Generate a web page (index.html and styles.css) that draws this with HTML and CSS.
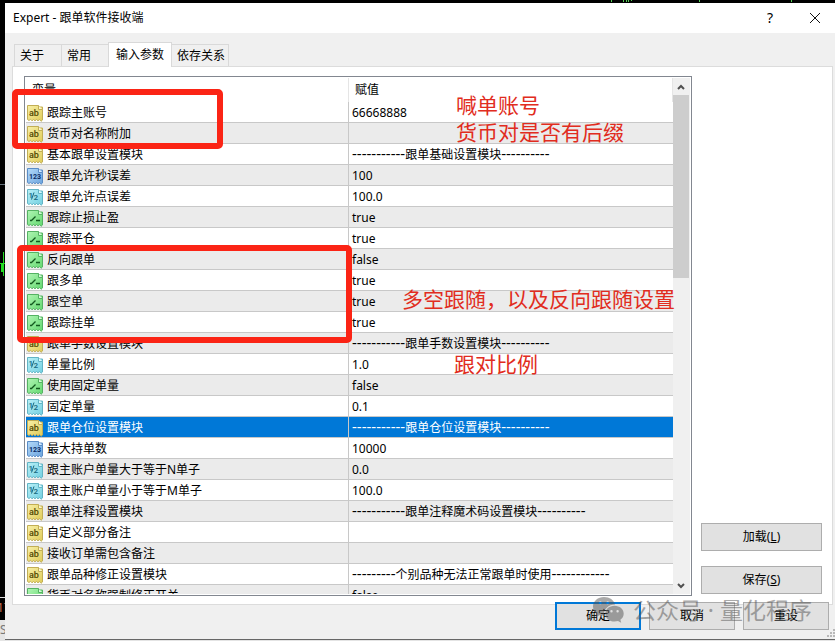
FILE: index.html
```html
<!DOCTYPE html>
<html lang="zh-CN">
<head>
    <meta charset="UTF-8">
    <meta name="viewport" content="width=device-width, initial-scale=1.0">
    <title>Expert - 跟单软件接收端</title>
    <link rel="stylesheet" href="styles.css">
</head>
<body>
    <!-- Icon shapes shared by the table rows -->
    <svg class="sprite" aria-hidden="true">
        <defs>
            <linearGradient id="gold" x1="0" y1="0" x2="1" y2="1"><stop offset="0" stop-color="#f8f0a8"/><stop offset="1" stop-color="#dfcb58"/></linearGradient>
            <linearGradient id="blue" x1="0" y1="0" x2="1" y2="1"><stop offset="0" stop-color="#b4dafa"/><stop offset="1" stop-color="#6ba3dc"/></linearGradient>
            <linearGradient id="cyan" x1="0" y1="0" x2="1" y2="1"><stop offset="0" stop-color="#b8f0f8"/><stop offset="1" stop-color="#72cfe0"/></linearGradient>
            <linearGradient id="green" x1="0" y1="0" x2="1" y2="1"><stop offset="0" stop-color="#b0f5b4"/><stop offset="1" stop-color="#62d86e"/></linearGradient>
            <path id="paper" d="M.5 .5H11.5L13 2H15.5V15L14 16.3L12.5 14.5L11 15.8L9.5 14.5L8 15.8L6.5 14.5L5 15.8L3.5 14.3L2 15.5L.5 14.5Z"/>
            <path id="fold" d="M11.5 .5V4.5H15.5"/>
            <symbol id="text" viewBox="0 0 16 17">
                <use href="#paper" fill="url(#gold)" stroke="#c2ae55"/><use href="#fold" fill="#fbf6cc" stroke="#c2ae55"/>
                <text x="2" y="11" font-size="9" font-weight="500" fill="#4f4700">ab</text>
            </symbol>
            <symbol id="int" viewBox="0 0 16 17">
                <use href="#paper" fill="url(#blue)" stroke="#5a8cc6"/><use href="#fold" fill="#d5eaff" stroke="#5a8cc6"/>
                <text x="2" y="11" font-size="7" font-weight="700" fill="#0a2c66">123</text>
            </symbol>
            <symbol id="real" viewBox="0 0 16 17">
                <use href="#paper" fill="url(#cyan)" stroke="#62b4c5"/><use href="#fold" fill="#dcf9fd" stroke="#62b4c5"/>
                <text x="1.5" y="9" font-size="8" font-weight="500" fill="#14677e">1</text>
                <path d="M4.500 10.500L7 3.500" stroke="#14677e" fill="none"/>
                <text x="6.500" y="11" font-size="8" font-weight="500" fill="#14677e">2</text>
            </symbol>
            <symbol id="bool" viewBox="0 0 16 17">
                <use href="#paper" fill="url(#green)" stroke="#55b263"/><use href="#fold" fill="#d5fad8" stroke="#55b263"/>
                <path d="M3 10.500H4.500L8.500 6.500M9 10.500H13" stroke="#12591e" stroke-width="1.300" fill="none"/>
            </symbol>
        </defs>
    </svg>

    <!-- Slice of the chart behind the dialog -->
    <div class="desktop" aria-hidden="true">
        <svg class="ticks" width="184" height="2"><path d="M.5 0V2M12.5 0V2M15.5 0V2M17.5 0V2M20.5 0V1M88.5 0V2M180.5 0V2" stroke="#55cf55"/></svg>
        <svg class="candle" width="5" height="26"><path d="M3 0H4V24H3ZM0 11H5V12H0ZM1 11H3V20H1Z" fill="#22dd22"/></svg>
        <div class="axis">17</div>
        <div class="status">S</div>
    </div>

    <div class="dialog">
        <header class="titlebar">
            <h1>Expert - 跟单软件接收端</h1>
            <button class="caption help" aria-label="帮助">?</button>
            <button class="caption" aria-label="关闭"><svg width="12" height="12"><path d="M1 1L11 11M11 1L1 11" stroke="#111" fill="none"/></svg></button>
        </header>

        <nav class="tabs">
            <button class="tab">关于</button>
            <button class="tab">常用</button>
            <button class="tab active">输入参数</button>
            <button class="tab">依存关系</button>
        </nav>

        <main class="panel">
            <div class="list">
                <div class="rows">
                    <table>
                        <thead><tr><th class="name">变量</th><th>赋值</th></tr></thead>
                        <tbody>
                            <tr><td><svg class="icon"><use href="#text"/></svg>跟踪主账号</td><td>66668888</td></tr>
                            <tr><td><svg class="icon"><use href="#text"/></svg>货币对名称附加</td><td></td></tr>
                            <tr><td><svg class="icon"><use href="#text"/></svg>基本跟单设置模块</td><td><span class="dash">-----------</span>跟单基础设置模块<span class="dash">----------</span></td></tr>
                            <tr><td><svg class="icon"><use href="#int"/></svg>跟单允许秒误差</td><td>100</td></tr>
                            <tr><td><svg class="icon"><use href="#real"/></svg>跟单允许点误差</td><td>100.0</td></tr>
                            <tr><td><svg class="icon"><use href="#bool"/></svg>跟踪止损止盈</td><td>true</td></tr>
                            <tr><td><svg class="icon"><use href="#bool"/></svg>跟踪平仓</td><td>true</td></tr>
                            <tr><td><svg class="icon"><use href="#bool"/></svg>反向跟单</td><td>false</td></tr>
                            <tr><td><svg class="icon"><use href="#bool"/></svg>跟多单</td><td>true</td></tr>
                            <tr><td><svg class="icon"><use href="#bool"/></svg>跟空单</td><td>true</td></tr>
                            <tr><td><svg class="icon"><use href="#bool"/></svg>跟踪挂单</td><td>true</td></tr>
                            <tr><td><svg class="icon"><use href="#text"/></svg>跟单手数设置模块</td><td><span class="dash">-----------</span>跟单手数设置模块<span class="dash">----------</span></td></tr>
                            <tr><td><svg class="icon"><use href="#real"/></svg>单量比例</td><td>1.0</td></tr>
                            <tr><td><svg class="icon"><use href="#bool"/></svg>使用固定单量</td><td>false</td></tr>
                            <tr><td><svg class="icon"><use href="#real"/></svg>固定单量</td><td>0.1</td></tr>
                            <tr class="selected"><td><svg class="icon"><use href="#text"/></svg>跟单仓位设置模块</td><td><span class="dash">-----------</span>跟单仓位设置模块<span class="dash">----------</span></td></tr>
                            <tr><td><svg class="icon"><use href="#int"/></svg>最大持单数</td><td>10000</td></tr>
                            <tr><td><svg class="icon"><use href="#real"/></svg>跟主账户单量大于等于N单子</td><td>0.0</td></tr>
                            <tr><td><svg class="icon"><use href="#real"/></svg>跟主账户单量小于等于M单子</td><td>100.0</td></tr>
                            <tr><td><svg class="icon"><use href="#text"/></svg>跟单注释设置模块</td><td><span class="dash">-----------</span>跟单注释魔术码设置模块<span class="dash">----------</span></td></tr>
                            <tr><td><svg class="icon"><use href="#text"/></svg>自定义部分备注</td><td></td></tr>
                            <tr><td><svg class="icon"><use href="#text"/></svg>接收订单需包含备注</td><td></td></tr>
                            <tr><td><svg class="icon"><use href="#text"/></svg>跟单品种修正设置模块</td><td><span class="dash">---------</span>个别品种无法正常跟单时使用<span class="dash">------------</span></td></tr>
                            <tr><td><svg class="icon"><use href="#bool"/></svg>货币对名称强制修正开关</td><td>false</td></tr>
                        </tbody>
                    </table>
                </div>
                <div class="scrollbar">
                    <button aria-label="向上滚动"><svg width="8" height="6"><path d="M1 5L4 2L7 5" stroke="#505050" stroke-width="2" fill="none"/></svg></button>
                    <div class="track"><div class="thumb"></div></div>
                    <button aria-label="向下滚动"><svg width="8" height="6"><path d="M1 1L4 4L7 1" stroke="#505050" stroke-width="2" fill="none"/></svg></button>
                </div>
            </div>
            <div class="side">
                <button class="btn">加载(<u>L</u>)</button>
                <button class="btn">保存(<u>S</u>)</button>
            </div>
        </main>

        <footer class="actions">
            <button class="btn default">确定</button>
            <button class="btn">取消</button>
            <button class="btn">重设</button>
        </footer>
        <svg class="grip" width="8" height="8" aria-hidden="true"><path d="M6 0H8V2H6ZM3 3H5V5H3ZM6 3H8V5H6ZM0 6H2V8H0ZM3 6H5V8H3ZM6 6H8V8H6Z" fill="#b8b8b8"/></svg>
    </div>

    <!-- Notes drawn over the dialog -->
    <div class="box box-account"></div>
    <div class="box box-direction"></div>
    <p class="note note-account">喊单账号<br>货币对是否有后缀</p>
    <p class="note note-direction">多空跟随，以及反向跟随设置</p>
    <p class="note note-ratio">跟对比例</p>

    <div class="watermark">
        <svg width="32" height="27" viewBox="0 0 32 27" aria-hidden="true">
            <path fill-rule="evenodd" d="M11 0C4.900 0 0 4.200 0 9.400C0 12.400 1.600 15 4.100 16.700L3 20L6.900 18C8.200 18.500 9.700 18.700 11.300 18.700C10 12 16 7.300 22 7.400C21 3.100 16.500 0 11 0ZM7.300 4.500A1.400 1.400 0 1 0 7.300 7.300A1.400 1.400 0 1 0 7.300 4.500ZM14.700 4.500A1.400 1.400 0 1 0 14.700 7.300A1.400 1.400 0 1 0 14.700 4.500Z"/>
            <path fill-rule="evenodd" d="M21.500 8.800C16.200 8.800 12.300 12.400 12.300 16.700C12.300 21.100 16.300 24.500 21.500 24.500C22.700 24.500 23.900 24.300 25 24L28.200 25.800L27.400 22.700C29.400 21.300 30.700 19.200 30.700 16.700C30.700 12.400 26.800 8.800 21.500 8.800ZM18.500 13A1.200 1.200 0 1 0 18.500 15.400A1.200 1.200 0 1 0 18.500 13ZM24.600 13A1.200 1.200 0 1 0 24.600 15.400A1.200 1.200 0 1 0 24.600 13Z"/>
        </svg>
        <span>公众号 · 量化程序</span>
    </div>
</body>
</html>
```

FILE: styles.css
```css
/* Reset */
* {
    margin: 0;
    padding: 0;
    box-sizing: border-box;
}

body {
    position: relative;
    height: 100vh;
    padding: 3px 0 1px 5px;
    overflow: hidden;
    background-color: #000;
    color: #000;
    font-family: "Noto Sans", "Noto Sans CJK SC", sans-serif;
    font-size: 12px;
    line-height: 20px;
}

button {
    border: none;
    background: none;
    color: inherit;
    font: inherit;
}

svg {
    display: block;
}

.sprite {
    position: absolute;
    width: 0;
    height: 0;
}

/* Chart behind the dialog */
.desktop {
    position: absolute;
    inset: 0;
}

.ticks {
    position: absolute;
    top: 0;
    left: 611px;
}

.candle {
    position: absolute;
    top: 252px;
    left: 0;
}

.desktop::before {
    content: "";
    position: absolute;
    top: 184px;
    width: 5px;
    height: 1px;
    background-color: #66727c;
}

.axis,
.status {
    position: absolute;
    left: 0;
    width: 5px;
    overflow: hidden;
}

.axis {
    bottom: 22px;
    height: 22px;
    border-top: 1px solid #ddd;
    color: #c86e50;
    text-indent: -3px;
}

.status {
    bottom: 0;
    width: 100%;
    height: 21px;
    background-color: #e4e4e4;
    color: #777;
}

/* Dialog */
.dialog {
    position: relative;
    display: flex;
    flex-direction: column;
    height: 100%;
    border-bottom: 1px solid #666;
    background-color: #f0f0f0;
}

.titlebar {
    display: flex;
    align-items: center;
    height: 30px;
    padding-left: 8px;
    background-color: #fff;
}

.titlebar h1 {
    flex: 1;
    font-size: 12px;
    font-weight: 400;
}

.caption {
    display: flex;
    align-items: center;
    justify-content: center;
    width: 40px;
    height: 30px;
}

.help {
    width: 50px;
    font-size: 14px;
}

/* Tabs */
.tabs {
    display: flex;
    align-items: flex-end;
    padding: 9px 9px 0;
}

.tab {
    min-width: 48px;
    height: 22px;
    margin-right: -1px;
    padding: 0 3px 0 5px;
    border: 1px solid #d9d9d9;
    border-bottom: none;
    text-align: left;
}

.tab.active {
    height: 25px;
    margin-bottom: -1px;
    padding: 0 7px;
    background-color: #fff;
    z-index: 1;
}

.panel {
    display: flex;
    flex: 1;
    gap: 9px;
    min-height: 0;
    margin: 0 2px 0 7px;
    padding: 9px 10px 8px 11px;
    border: 1px solid #dcdcdc;
    background-color: #fff;
}

/* Parameter list */
.list {
    display: flex;
    flex: 1;
    min-width: 0;
    padding: 1px;
    border: 1px solid #828790;
}

.rows {
    flex: 1;
    overflow: hidden;
}

table {
    width: 100%;
    border-collapse: separate;
    border-spacing: 0;
    table-layout: fixed;
}

th,
td {
    text-align: left;
    white-space: nowrap;
}

th {
    height: 24px;
    padding: 0 6px;
    border-right: 1px solid #e5e5e5;
    font-weight: 400;
}

th.name {
    width: 323px;
}

td {
    height: 21px;
    padding: 2px 0 0 3px;
    border-bottom: 1px solid #c8c8c8;
    line-height: 18px;
}

td:first-child {
    padding-left: 1px;
    border-right: 1px solid #c8c8c8;
}

tbody tr:nth-child(even) {
    background-color: #ebebeb;
}

tbody tr.selected {
    background-color: #0078d7;
    color: #fff;
}

.icon {
    float: left;
    width: 16px;
    height: 17px;
    margin: 1px 4px 0 0;
    font-family: Roboto, sans-serif;
}

/* Wider hyphens for the section rules */
.dash {
    font-size: 15px;
    line-height: 1px;
}

.scrollbar {
    display: flex;
    flex-direction: column;
    width: 17px;
    padding-right: 1px;
    background-color: #f0f0f0;
}

.scrollbar button {
    display: flex;
    align-items: center;
    justify-content: center;
    height: 17px;
}

.track {
    flex: 1;
}

.thumb {
    height: 38%;
    background-color: #cdcdcd;
}

/* Buttons */
.side {
    display: flex;
    flex-direction: column;
    justify-content: flex-end;
    gap: 15px;
    width: 121px;
    padding-bottom: 2px;
}

.btn {
    height: 28px;
    border: 1px solid #adadad;
    background-color: #e1e1e1;
}

.btn.default {
    border: 2px solid #0078d7;
}

.actions {
    display: flex;
    justify-content: flex-end;
    gap: 8px;
    margin-top: -3px;
    padding: 0 6px 9px;
}

.actions .btn {
    width: 86px;
}

.grip {
    position: absolute;
    right: 0;
    bottom: 2px;
}

/* Notes */
.box {
    position: absolute;
    border: 6px solid #fb2415;
    border-radius: 5px;
}

.box-account {
    top: 89px;
    left: 12px;
    width: 211px;
    height: 60px;
}

.box-direction {
    top: 245px;
    left: 17px;
    width: 335px;
    height: 98px;
}

.note {
    position: absolute;
    color: #e12c20;
    font-family: "Noto Sans CJK SC", sans-serif;
    font-size: 21px;
    line-height: 27px;
    white-space: nowrap;
}

.note-account {
    top: 91px;
    left: 456px;
}

.note-direction {
    top: 285px;
    left: 402px;
}

.note-ratio {
    top: 350px;
    left: 454px;
}

.watermark {
    position: absolute;
    right: 23px;
    bottom: 15px;
    display: flex;
    align-items: center;
    gap: 8px;
    color: #555;
    fill: #555;
    font-size: 23px;
    line-height: 32px;
    opacity: 0.5;
}
```
